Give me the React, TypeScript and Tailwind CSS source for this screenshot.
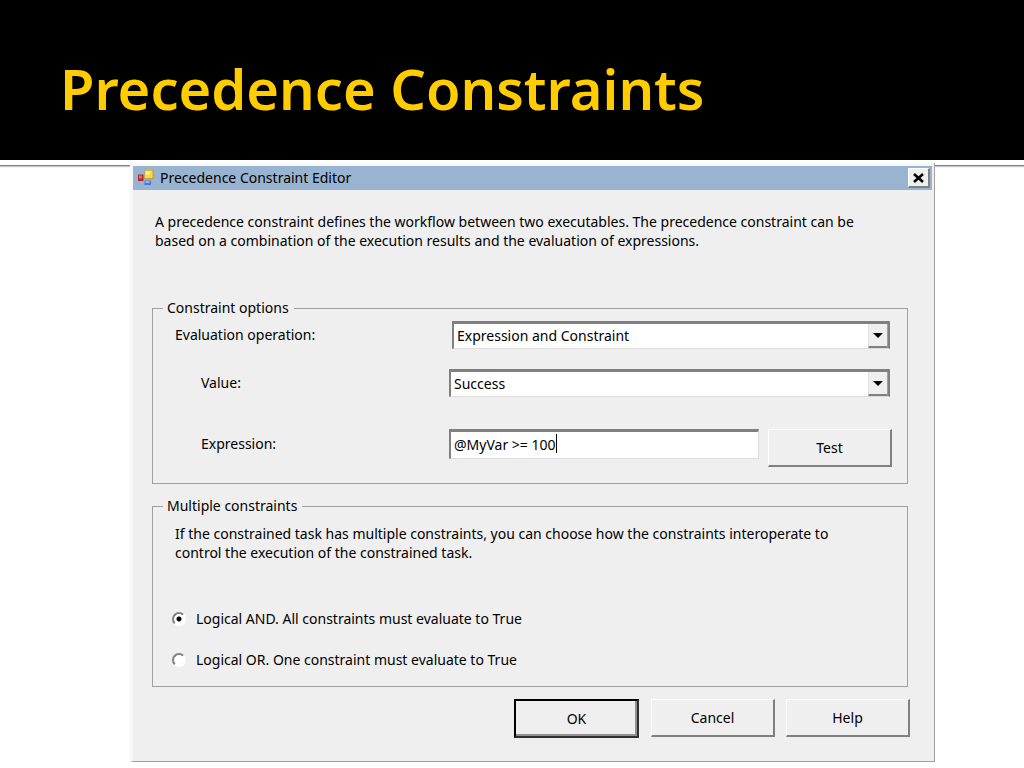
import type { ReactNode } from "react"

const FormIcon = () => (
    <svg width="18" height="18" viewBox="0 0 18 18" aria-hidden="true">
        <rect x="1" y="5.5" width="5.5" height="6.5" fill="#b02a2a" />
        <rect x="2" y="6.5" width="3" height="3" fill="#e07070" />
        <rect x="7.5" y="1" width="9" height="9" fill="#c99a1c" />
        <rect x="8" y="1.5" width="7.5" height="7.5" fill="#ffd84a" />
        <rect x="9" y="2.5" width="4" height="3" fill="#fff0a0" />
        <rect x="7.5" y="11.5" width="6.5" height="4.5" fill="#4a78d8" />
        <rect x="8.5" y="12" width="4" height="2" fill="#8fb4f4" />
    </svg>
)

const raised = "h-[38px] w-[124px] border-t border-r-2 border-b-2 border-l border-t-white border-l-white border-r-[#808080] border-b-[#808080] bg-[#efefef] text-center"
const sunken = "w-full border-t-3 border-l-2 border-b border-t-[#808080] border-l-[#808080] border-b-[#dcdcdc] bg-white pl-[3px]"

type ComboProps = { id: string; value: string; options: string[] }

const Combo = ({ id, value, options }: ComboProps) => (
    <div className="relative flex-1">
        <select id={id} defaultValue={value} className={`${sunken} block h-7 appearance-none border-r-2 border-r-[#808080] outline-none`}>
            {options.map((o) => <option key={o}>{o}</option>)}
        </select>
        <span className="pointer-events-none absolute top-[3px] right-[2px] bottom-px flex w-5 items-center justify-center border-r border-b-2 border-l border-r-[#a0a0a0] border-b-[#808080] border-l-[#e0e0e0] bg-[#efefef]">
            <svg width="10" height="5" viewBox="0 0 10 5" aria-hidden="true">
                <path d="M0 0h10L5 5z" fill="#000" />
            </svg>
        </span>
    </div>
)

const Group = ({ title, children }: { title: string; children: ReactNode }) => (
    <fieldset className="min-w-0 border border-[#a0a0a0]">
        <legend className="ml-[10px] h-5 pr-[5px] pl-1 leading-5">{title}</legend>
        {children}
    </fieldset>
)

const Choice = ({ label, checked }: { label: string; checked?: boolean }) => (
    <label className="flex h-5 items-center gap-[10px]">
        <input
            type="radio"
            name="logic"
            defaultChecked={checked}
            className="size-[14px] appearance-none rounded-full border-2 border-t-[#808080] border-r-white border-b-white border-l-[#808080] bg-white checked:bg-[radial-gradient(circle,#000_2px,#fff_3px)]"
        />
        {label}
    </label>
)

const Dialog = () => (
    <section className="mt-[3px] border-r border-b border-l-3 border-r-[#a0a0a0] border-b-[#a0a0a0] border-l-[#f8f8f8] bg-[#efefef] font-['Noto_Sans','Open_Sans',sans-serif] text-sm text-black">
        <div className="mr-[2px] flex h-[27px] items-center border-t-3 border-[#f8f8f8] bg-[#99b4d1] pr-[2px] pl-1">
            <FormIcon />
            <h2 className="ml-[5px] flex-1">Precedence Constraint Editor</h2>
            <button aria-label="Close" className="flex h-5 w-[22px] items-center justify-center border-t border-r-2 border-b-2 border-l border-t-white border-l-white border-r-[#808080] border-b-[#808080] bg-[#efefef]">
                <svg width="11" height="10" viewBox="0 0 11 10" aria-hidden="true">
                    <path d="M1 1l9 8M10 1L1 9" stroke="#000" strokeWidth="2.6" />
                </svg>
            </button>
        </div>

        <div className="pt-[22px] pr-[26px] pb-[23px] pl-[19px]">
            <p className="pl-[3px] leading-[19px]">
                A precedence constraint defines the workflow between two executables. The precedence constraint can be<br />
                based on a combination of the execution results and the evaluation of expressions.
            </p>

            <div className="mt-12 flex flex-col gap-3">
                <Group title="Constraint options">
                    <div className="flex items-center pt-[3px] pr-[17px] pl-[22px]">
                        <label htmlFor="operation" className="w-[277px] shrink-0">Evaluation operation:</label>
                        <Combo id="operation" value="Expression and Constraint" options={["Constraint", "Expression", "Expression and Constraint", "Expression or Constraint"]} />
                    </div>
                    <div className="mt-5 flex items-center pr-[17px] pl-12">
                        <label htmlFor="value" className="w-[248px] shrink-0">Value:</label>
                        <Combo id="value" value="Success" options={["Success", "Failure", "Completion"]} />
                    </div>
                    <div className="mt-8 flex items-start pr-[15px] pb-4 pl-12">
                        <label htmlFor="expression" className="w-[248px] shrink-0 leading-[30px]">Expression:</label>
                        <div className="relative mr-[9px] flex-1">
                            <input id="expression" defaultValue="@MyVar >= 100" className={`${sunken} block h-[30px] border-r border-r-[#dcdcdc] pb-[2px] caret-transparent outline-none`} />
                            <span className="absolute top-[5px] left-[107px] h-[19px] w-px bg-black" />
                        </div>
                        <button className={raised}>Test</button>
                    </div>
                </Group>

                <Group title="Multiple constraints">
                    <p className="pt-2 pl-[22px] leading-[19px]">
                        If the constrained task has multiple constraints, you can choose how the constraints interoperate to<br />
                        control the execution of the constrained task.
                    </p>
                    <div className="mt-[47px] flex flex-col gap-[21px] pb-4 pl-[19px]">
                        <Choice label="Logical AND. All constraints must evaluate to True" checked />
                        <Choice label="Logical OR. One constraint must evaluate to True" />
                    </div>
                </Group>
            </div>

            <div className="-mr-[2px] mt-3 flex justify-end gap-[11px]">
                <button className="mr-px h-[39px] w-[125px] border-2 border-t-black border-r-[#303030] border-b-[#303030] border-l-black bg-[#efefef] shadow-[inset_-2px_-2px_0_#909090]">OK</button>
                <button className={raised}>Cancel</button>
                <button className={raised}>Help</button>
            </div>
        </div>
    </section>
)

const Rule = () => <div className="h-[6px] border-b border-[#808080] shadow-[0_1px_1px_#c8c8c8]" />

const App = () => {
    return (
        <div className="min-h-screen bg-white">
            <header className="flex h-40 items-center bg-black pl-[60px]">
                <h1 className="mt-4 font-['Noto_Sans','Open_Sans',sans-serif] text-[56px] leading-none font-semibold text-[#ffcc00]">Precedence Constraints</h1>
            </header>
            <main className="grid grid-cols-[130fr_805fr_89fr]">
                <Rule />
                <Dialog />
                <Rule />
            </main>
        </div>
    )
}

export default App
